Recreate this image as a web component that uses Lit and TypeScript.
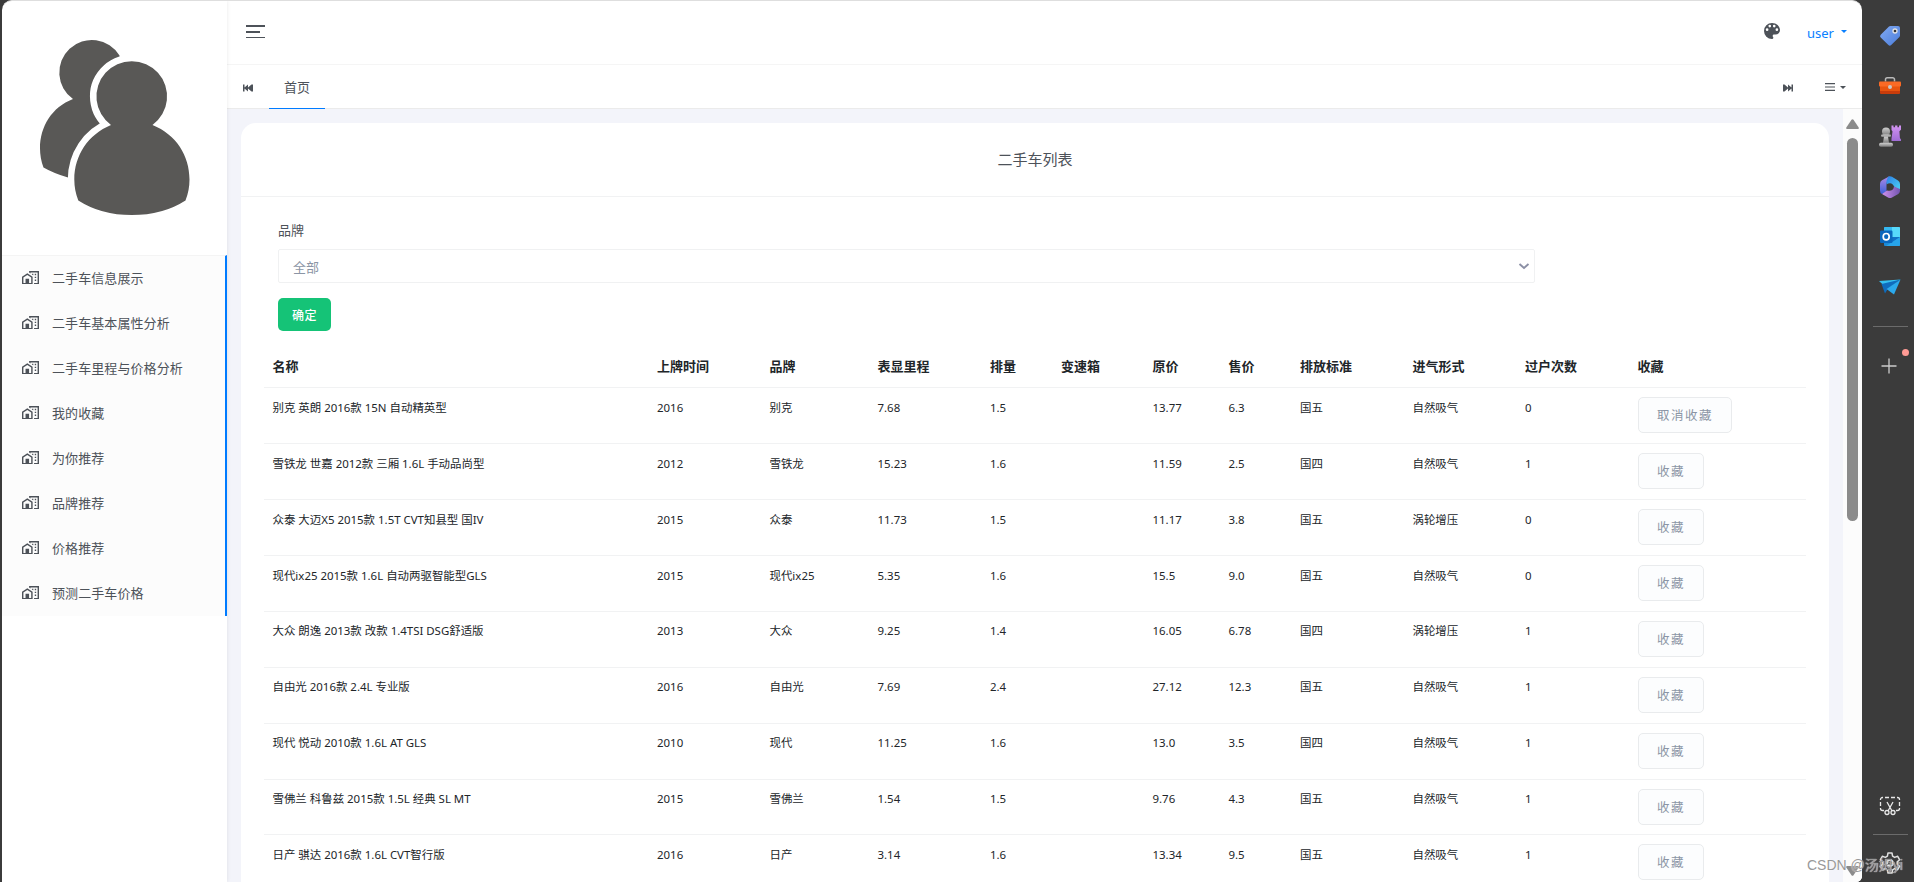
import { LitElement, html, css, svg } from "lit";
import { customElement } from "lit/decorators.js";

const MENU = [
  "二手车信息展示",
  "二手车基本属性分析",
  "二手车里程与价格分析",
  "我的收藏",
  "为你推荐",
  "品牌推荐",
  "价格推荐",
  "预测二手车价格",
];

const COLUMNS = ["名称", "上牌时间", "品牌", "表显里程", "排量", "变速箱", "原价", "售价", "排放标准", "进气形式", "过户次数", "收藏"];

const CARS: string[][] = [
  ["别克 英朗 2016款 15N 自动精英型", "2016", "别克", "7.68", "1.5", "", "13.77", "6.3", "国五", "自然吸气", "0", "取消收藏"],
  ["雪铁龙 世嘉 2012款 三厢 1.6L 手动品尚型", "2012", "雪铁龙", "15.23", "1.6", "", "11.59", "2.5", "国四", "自然吸气", "1", "收藏"],
  ["众泰 大迈X5 2015款 1.5T CVT知县型 国IV", "2015", "众泰", "11.73", "1.5", "", "11.17", "3.8", "国五", "涡轮增压", "0", "收藏"],
  ["现代ix25 2015款 1.6L 自动两驱智能型GLS", "2015", "现代ix25", "5.35", "1.6", "", "15.5", "9.0", "国五", "自然吸气", "0", "收藏"],
  ["大众 朗逸 2013款 改款 1.4TSI DSG舒适版", "2013", "大众", "9.25", "1.4", "", "16.05", "6.78", "国四", "涡轮增压", "1", "收藏"],
  ["自由光 2016款 2.4L 专业版", "2016", "自由光", "7.69", "2.4", "", "27.12", "12.3", "国五", "自然吸气", "1", "收藏"],
  ["现代 悦动 2010款 1.6L AT GLS", "2010", "现代", "11.25", "1.6", "", "13.0", "3.5", "国四", "自然吸气", "1", "收藏"],
  ["雪佛兰 科鲁兹 2015款 1.5L 经典 SL MT", "2015", "雪佛兰", "1.54", "1.5", "", "9.76", "4.3", "国五", "自然吸气", "1", "收藏"],
  ["日产 骐达 2016款 1.6L CVT智行版", "2016", "日产", "3.14", "1.6", "", "13.34", "9.5", "国五", "自然吸气", "1", "收藏"],
];

const homeIcon = html`<svg class="home" viewBox="0 2 24 19"><path fill="currentColor" d="M10,2V4.26L12,5.59V4H22V19H17V21H24V2H10M7.5,5L0,10V21H15V10L7.5,5M14,6V6.93L15.61,8H16V6H14M18,6V8H20V6H18M7.5,7.5L13,11V19H10V13H5V19H2V11L7.5,7.5M18,10V12H20V10H18M18,14V16H20V14H18Z"/></svg>`;

const paletteIcon = html`<svg class="palette" viewBox="3 3 18 18"><path fill="currentColor" d="M17.5,12A1.5,1.5 0 0,1 16,10.5A1.5,1.5 0 0,1 17.5,9A1.5,1.5 0 0,1 19,10.5A1.5,1.5 0 0,1 17.5,12M14.5,8A1.5,1.5 0 0,1 13,6.5A1.5,1.5 0 0,1 14.5,5A1.5,1.5 0 0,1 16,6.5A1.5,1.5 0 0,1 14.5,8M9.5,8A1.5,1.5 0 0,1 8,6.5A1.5,1.5 0 0,1 9.5,5A1.5,1.5 0 0,1 11,6.5A1.5,1.5 0 0,1 9.5,8M6.5,12A1.5,1.5 0 0,1 5,10.5A1.5,1.5 0 0,1 6.5,9A1.5,1.5 0 0,1 8,10.5A1.5,1.5 0 0,1 6.5,12M12,3A9,9 0 0,0 3,12A9,9 0 0,0 12,21A1.5,1.5 0 0,0 13.5,19.5C13.5,19.11 13.35,18.76 13.11,18.5C12.88,18.23 12.73,17.88 12.73,17.5A1.5,1.5 0 0,1 14.23,16H16A5,5 0 0,0 21,11C21,6.58 16.97,3 12,3Z"/></svg>`;

const front = "M111 124.5A35.3 35.3 0 1 1 152.5 124.5C176 134 189.5 155 189.5 179Q189.5 190 185.5 200Q163 214.6 131.7 214.6Q101 214.6 78.300 200Q74.300 190 74.300 179C74.300 155 88 134 111 124.500Z";

const usersPicture = html`<svg class="users" viewBox="0 0 225 255">
  <g transform="translate(-2 .5)">
    <path fill="#595856" d="M73 98.500A32.500 32.500 0 1 1 119.500 55L125 110L68 177Q54 173 43.500 167Q40 158 40 148C40 126 52 106.500 73 98.500Z"/>
    <path fill="#595856" stroke="#fff" stroke-width="13" paint-order="stroke" d=${front}/>
  </g>
</svg>`;

const sideIcons = [
  svg`<defs><linearGradient id="tg" x1="0" y1="0" x2="1" y2="1"><stop offset="0" stop-color="#83aaf1"/><stop offset="1" stop-color="#4a7ddb"/></linearGradient></defs>
    <path fill="url(#tg)" d="M12.500 2H20a2 2 0 0 1 2 2v7.500a2 2 0 0 1-.6 1.400L13.200 21a2 2 0 0 1-2.800 0L2.700 13.600a2 2 0 0 1 0-2.800L11 2.600A2 2 0 0 1 12.500 2Z"/><circle cx="17" cy="7" r="2" fill="#333" stroke="#e3e3e3" stroke-width="1.300"/>`,
  svg`<path fill="none" stroke="#b9b9b9" stroke-width="1.500" d="M7.500 7.500V5.500a1.800 1.800 0 0 1 1.800-1.800h5.400a1.800 1.800 0 0 1 1.800 1.800v2"/><path fill="#c93c0b" d="M2 12h20v7a1 1 0 0 1-1 1H3a1 1 0 0 1-1-1Z"/><path fill="#e9540f" d="M2 12h20v5H2Z"/><rect x="1" y="7.500" width="22" height="5" rx="1" fill="#fb6a25"/><circle cx="12" cy="13" r="2" fill="#c8c8c8"/>`,
  svg`<defs><linearGradient id="rk" x1="0" y1="0" x2="0" y2="1"><stop offset="0" stop-color="#d394f2"/><stop offset="1" stop-color="#a06cd5"/></linearGradient><linearGradient id="pw" x1="0" y1="0" x2="0" y2="1"><stop offset="0" stop-color="#cfcfcf"/><stop offset="1" stop-color="#7c7c7c"/></linearGradient></defs>
    <path fill="url(#rk)" d="M13.500 1.500h2v1.700h1.600V1.500h2.300v1.700H21V1.500h2v4.200l-1.600 1.500.5 6.800 1.200 1.700v1.300h-9.600v-2.500l1-7-1-1.500Z"/>
    <g fill="url(#pw)"><circle cx="8" cy="7.500" r="4"/><rect x="3" y="10.500" width="10" height="2.600" rx="1.300"/><path d="M6 12.500h4l1 6.500H5Z"/><rect x="1" y="18.800" width="14" height="4" rx="1.800"/></g>`,
  svg`<defs><linearGradient id="ma" x1="0" y1="0" x2="1" y2="1"><stop offset="0" stop-color="#2b7fe8"/><stop offset="1" stop-color="#4fd6f3"/></linearGradient><linearGradient id="mb" x1="0" y1="0" x2="0" y2="1"><stop offset="0" stop-color="#b28be6"/><stop offset="1" stop-color="#3a5fd9"/></linearGradient><linearGradient id="mc" x1="0" y1="0" x2="1" y2="0"><stop offset="0" stop-color="#cf90ee"/><stop offset="1" stop-color="#7355b0"/></linearGradient></defs>
    <path fill="url(#mb)" d="M11.500 1.200 4 5.300Q2 6.500 2 9v6.500Q2 18 4 19l4.500-2.600V8.500Q8.500 6 11 4.700Z"/>
    <path fill="url(#ma)" d="M10 1.800q2-1.200 4 0L20 5.500Q22 6.700 22 9v7l-6-4.500Q15 8.500 12 8.300q-2 0-3.500 1.200V6Z"/>
    <path fill="url(#mc)" d="M22 14V16q0 1.800-1.700 2.900L14 22.400q-2 1.100-4 0L4 19l5-3.500q3.500 1 5.500-.8 1.200-1 1.500-3.200Z"/>`,
  svg`<rect x="6" y="2" width="16" height="19" rx="1" fill="#1b8ad8"/><path fill="#35b8f1" d="M6 3a1 1 0 0 1 1-1h7v10H6Z"/><path fill="#57d9fb" d="M14 2h7a1 1 0 0 1 1 1v9h-8Z"/><path fill="#1170c4" d="M6 12h16l-7 5Z"/><path fill="#27a4ea" d="M22 12v8a1 1 0 0 1-1 1H8Z"/><rect x="2" y="5.500" width="12.500" height="12.500" rx="1.200" fill="#0a67bd"/><ellipse cx="8.200" cy="11.700" rx="3" ry="3.200" fill="none" stroke="#fff" stroke-width="1.700"/>`,
  svg`<path fill="#35c1f1" d="M1 6 22.500 4.500 7 11.500Z"/><path fill="#0f6cbd" d="M3.500 9 22.500 4.500 10 13.500 7 18.500Z"/><path fill="#2ba9ec" d="M22.500 4.500 16 19.500 8.500 14Z"/>`,
];

@customElement("app-root")
export class AppRoot extends LitElement {
  static styles = css`
    :host { display: block; }
    * { box-sizing: border-box; }
    .desktop { display: flex; width: 1914px; height: 882px; overflow: hidden; background: #3b3b3b; padding-left: 2px; position: relative;
      font-family: "Noto Sans", "Noto Sans CJK SC", sans-serif; font-size: 13px; color: #4d5259; }
    .window { width: 1860px; height: 882px; display: flex; background: #fff; border-radius: 10px 10px 6px 0; border-top: 1px solid #dedede; overflow: hidden; }
    .sidebar { width: 225px; flex: none; box-shadow: 0 0 4px rgba(0,0,0,.09); z-index: 1; }
    .users { display: block; width: 225px; height: 255px; margin-top: -1px; }
    .menu { border-top: 1px solid #f4f4f4; border-right: 2px solid #007bff; background: #fcfcfc; height: 361px; }
    .item { height: 45px; display: flex; align-items: center; padding-left: 19.500px; }
    .item span { padding-bottom: 3px; letter-spacing: .08px; }
    .home { width: 17px; height: 13.500px; margin: 0 13.500px 2px 0; flex: none; }
    .main { flex: 1; display: flex; flex-direction: column; min-width: 0; }
    .topbar { height: 64px; border-bottom: 1px solid #f5f5f5; display: flex; align-items: center; padding: 0 15px 0 19px; }
    .burger { display: grid; gap: 4px; width: 19px; margin-bottom: 3px; }
    .burger i { height: 2px; background: #4d5259; }
    .burger i:nth-child(2) { width: 14px; }
    .burger i:nth-child(3) { height: 1px; }
    .palette { width: 16px; height: 16px; margin: 0 27px 3px auto; }
    .user { color: #0a80ff; font-size: 13px; margin-right: 7px; }
    .caret { width: 0; height: 0; border: 3px solid transparent; border-bottom: 0; border-top-color: currentColor; }
    .blue { color: #0a80ff; margin-bottom: 2px; }
    .tabs { height: 44px; border-bottom: 1px solid #ebebeb; display: flex; align-items: stretch; padding: 0 16px 0 16px; }
    .tabs svg { align-self: center; width: 10px; height: 8px; margin-top: 2px; }
    .tab { margin-left: 16px; margin-right: auto; width: 56px; height: 44px; border-bottom: 1px solid #007bff; text-align: center; line-height: 44px; }
    .tabs .list { width: 10px; margin: 1px 5px 0 32px; }
    .tabs .caret { align-self: center; margin-top: 2px; }
    .body { flex: 1; display: flex; min-height: 0; background: #f3f4fa; }
    .card { width: 1588px; margin: 14px 14px 0 14px; flex: none; background: #fff; border-radius: 15px 15px 0 0; }
    .title { height: 74px; border-bottom: 1px solid #f1f2f3; text-align: center; font-size: 15px; line-height: 73px; }
    .form { padding: 23px 37px 0; }
    .label { height: 20px; line-height: 20px; margin-bottom: 9px; }
    .select { width: 1257px; height: 34px; border: 1px solid #f0f1f2; border-radius: 2px; display: flex; align-items: center; justify-content: space-between; padding: 0 4px 0 14px; color: #8b95a5; }
    .select svg { width: 12px; height: 12px; }
    .ok { width: 53px; height: 33px; margin-top: 15px; background: #15c377; color: #fff; border-radius: 5px; font-size: 12px; font-weight: 500; letter-spacing: .5px; display: flex; align-items: center; justify-content: center; }
    .table { margin: 14px 23px 0; }
    .row { display: grid; grid-template-columns: 384.500px 112.500px 108px 112.500px 71px 91.500px 76px 71.500px 112.500px 112.500px 112.500px 1fr; height: 55.875px; border-top: 1px solid #f1f2f3; color: #212529; font-size: 11.450px; line-height: 18px; padding-top: 10.500px; }
    .row > * { padding-left: 8.500px; white-space: nowrap; }
    .head { height: 42.400px; border: 0; font-size: 13px; font-weight: 700; line-height: 20px; padding-top: 11px; }
    .row .fav { display: block; margin: -1.500px 0 0 9px; height: 36px; line-height: 35px; padding: 0 18px; border: 1px solid #e9ebed; border-radius: 5px; background: #fcfdfe; color: #8b95a5; font-size: 12.500px; letter-spacing: 1.500px; justify-self: start; }
    .scroll { width: 19px; margin-left: auto; background: #fcfcfc; display: flex; flex-direction: column; align-items: center; justify-content: space-between; padding: 10px 0 6px; }
    .scroll svg { width: 13px; height: 10px; }
    .thumb { width: 11px; height: 383px; margin: 9px 0 auto; border-radius: 6px; background: #8b8b8b; }
    .rail { width: 52px; display: flex; flex-direction: column; align-items: center; padding: 25px 0 0 4px; }
    .rail svg { width: 22px; height: 22px; margin-bottom: 28.200px; flex: none; }
    .rail hr { width: 35px; height: 1px; margin: 0; border: 0; background: #6b6b6b; flex: none; }
    .rail .cut { margin: auto 0 17px; }
    .plusbox { position: relative; margin-top: 31px; margin-right: 2px; }
    .rail .plus { width: 16px; height: 16px; margin: 0; display: block; }
    .plusbox b { position: absolute; left: 21px; top: -9px; width: 7px; height: 7px; border-radius: 50%; background: #ff9b95; }
    .rail .gear { margin: 17px 0 8px; }
    .mark { position: absolute; left: 1807px; top: 855px; font: 14px/20px "Liberation Sans", "Noto Sans CJK SC", sans-serif; color: #999; text-shadow: 0 0 1px #fff; white-space: nowrap; }
  `;

  render() {
    return html`<div class="desktop">
      <div class="window">
        <aside class="sidebar">
          ${usersPicture}
          <nav class="menu">${MENU.map((m) => html`<div class="item">${homeIcon}<span>${m}</span></div>`)}</nav>
        </aside>
        <div class="main">
          <header class="topbar">
            <div class="burger"><i></i><i></i><i></i></div>
            ${paletteIcon}<span class="user">user</span><i class="caret blue"></i>
          </header>
          <div class="tabs">
            <svg viewBox="0 0 10 8"><path fill="currentColor" d="M0 .5h1.500v3L5 .5v3L8.500 .5H10v7H8.500L5 4.500v3L1.500 4.500v3H0Z"/></svg>
            <div class="tab">首页</div>
            <svg viewBox="0 0 10 8"><path fill="currentColor" d="M10 .5H8.500v3L5 .5v3L1.500 .5H0v7h1.500L5 4.500v3l3.500-3v3H10Z"/></svg>
            <svg class="list" viewBox="0 0 10 8"><path stroke="currentColor" stroke-width="1.200" d="M0 .6h10M0 4h10M0 7.400h10"/></svg>
            <i class="caret"></i>
          </div>
          <div class="body">
            <section class="card">
              <div class="title">二手车列表</div>
              <div class="form">
                <div class="label">品牌</div>
                <div class="select">全部<svg viewBox="0 0 12 12"><path fill="none" stroke="#8b8fa5" stroke-width="1.900" d="M1.500 4 6 8l4.500-4"/></svg></div>
                <div class="ok">确定</div>
              </div>
              <div class="table">
                <div class="row head">${COLUMNS.map((c) => html`<span>${c}</span>`)}</div>
                ${CARS.map((r) => html`<div class="row">${r.map((c, i) => (i === 11 ? html`<span class="fav">${c}</span>` : html`<span>${c}</span>`))}</div>`)}
              </div>
            </section>
            <div class="scroll">
              <svg viewBox="0 0 13 10"><path fill="#8b8b8b" d="M5.500 .8q1-1.200 2 0L12.700 8.500Q13.200 10 12 10H1Q-.2 10 .3 8.500Z"/></svg>
              <div class="thumb"></div>
              <svg viewBox="0 0 13 10"><path fill="#8b8b8b" d="M5.500 9.200q1 1.200 2 0L12.700 1.500Q13.200 0 12 0H1Q-.2 0 .3 1.500Z"/></svg>
            </div>
          </div>
        </div>
      </div>
      <aside class="rail">
        ${sideIcons.map((g) => html`<svg viewBox="1 1 22 22">${g}</svg>`)}
        <hr>
        <div class="plusbox"><svg class="plus" viewBox="0 0 16 16"><path stroke="#ccc" stroke-width="1.300" d="M8 .5v15M.5 8h15"/></svg><b></b></div>
        <svg class="cut" viewBox="0 0 22 22" fill="none" stroke="#e8e8e8" stroke-width="1.300"><path d="M4 2.500H3.500a2 2 0 0 0-2 2V5M6 2.500h4M12 2.500h4M18 2.500h.5a2 2 0 0 1 2 2V5M20.500 7v4M1.500 7v4M1.500 13v.5a2 2 0 0 0 2 2H5M20.500 13v.5a2 2 0 0 1-2 2H17"/><path d="m8 7 5 9M14 7l-5 9"/><circle cx="8" cy="17.500" r="2"/><circle cx="14" cy="17.500" r="2"/></svg>
        <hr>
        <svg class="gear" viewBox="1 1 22 22" fill="none" stroke="#e0e0e0" stroke-width="1.500" stroke-linejoin="round"><path d="M10 2h4l.6 3.200 2 1.200 3.100-1.100 2 3.500-2.500 2.100v2.200l2.500 2.100-2 3.500-3.100-1.100-2 1.200L14 22h-4l-.6-3.200-2-1.200-3.100 1.100-2-3.500 2.500-2.100v-2.200L2.300 8.800l2-3.500 3.100 1.100 2-1.200Z"/><circle cx="12" cy="12" r="3"/></svg>
      </aside>
      <div class="mark">CSDN @汤姆yi</div>
    </div>`;
  }
}
